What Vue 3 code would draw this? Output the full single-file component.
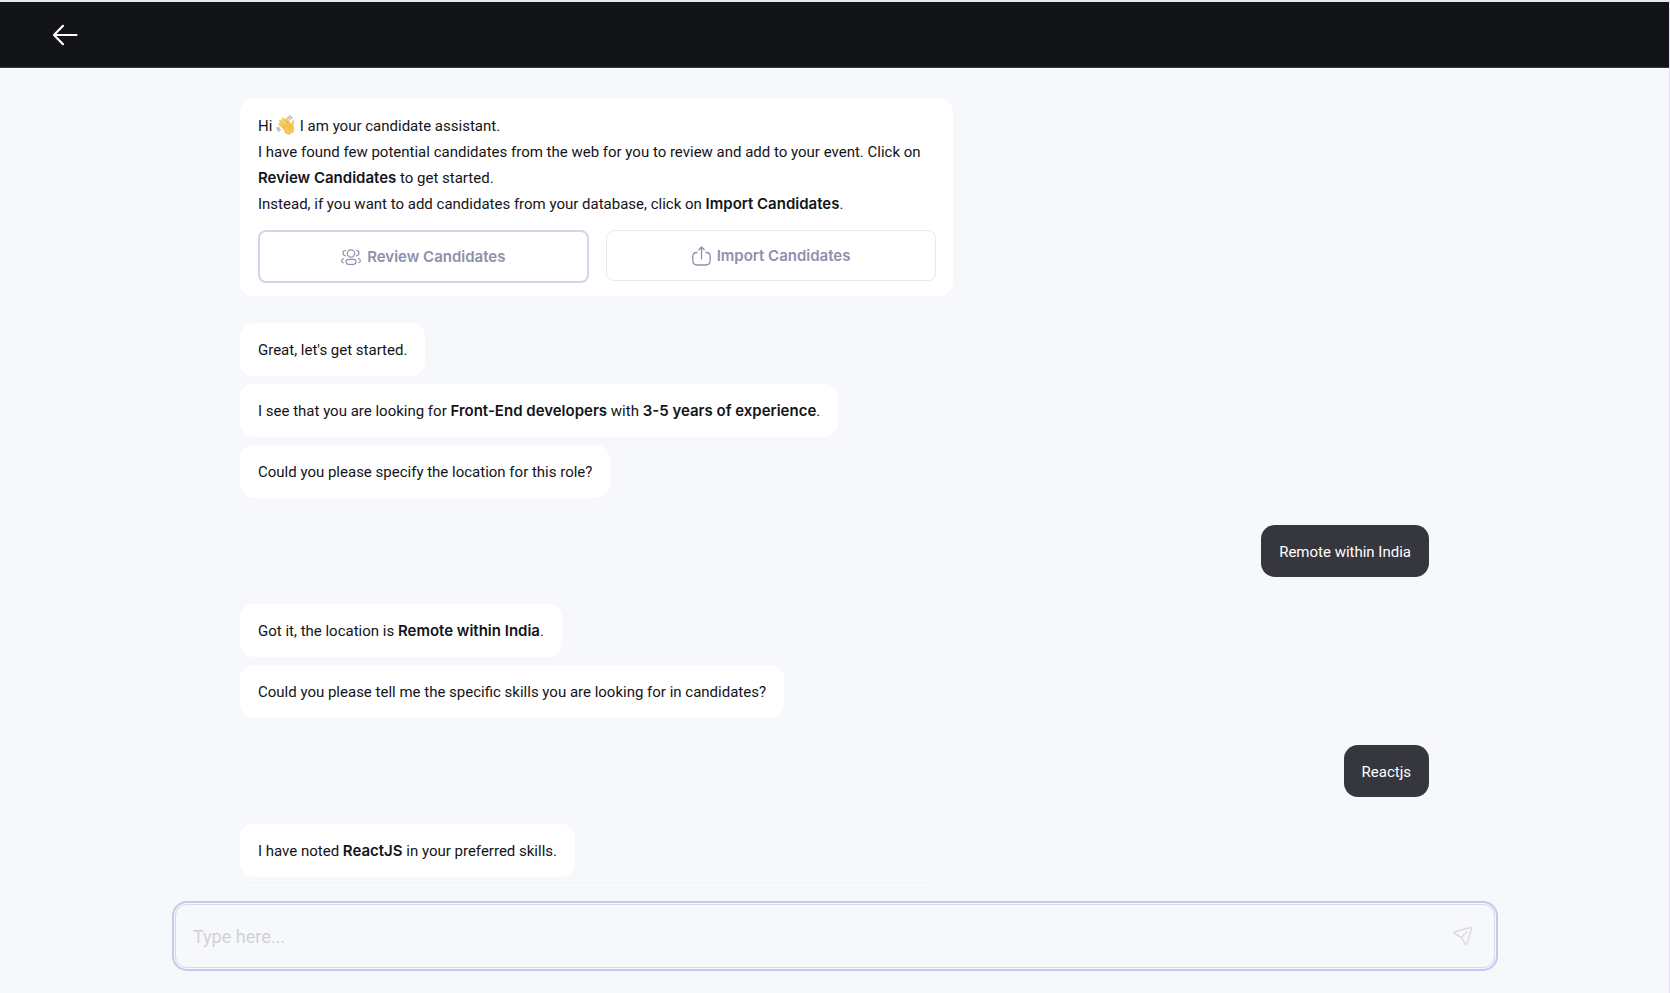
<script setup>
import { ref } from 'vue'

const draft = ref('')

const groups = [
  {
    from: 'bot',
    items: [
      [{ t: "Great, let's get started." }],
      [
        { t: 'I see that you are looking for ' },
        { t: 'Front-End developers', b: true },
        { t: ' with ' },
        { t: '3-5 years of experience', b: true },
        { t: '.' },
      ],
      [{ t: 'Could you please specify the location for this role?' }],
    ],
  },
  { from: 'user', items: [[{ t: 'Remote within India' }]] },
  {
    from: 'bot',
    items: [
      [{ t: 'Got it, the location is ' }, { t: 'Remote within India', b: true }, { t: '.' }],
      [{ t: 'Could you please tell me the specific skills you are looking for in candidates?' }],
    ],
  },
  { from: 'user', items: [[{ t: 'Reactjs' }]] },
  {
    from: 'bot',
    items: [
      [{ t: 'I have noted ' }, { t: 'ReactJS', b: true }, { t: ' in your preferred skills.' }],
      [],
    ],
  },
]
</script>

<template>
  <div class="page">
    <header class="topbar">
      <button class="back" type="button" aria-label="Back">
        <svg width="26" height="22" viewBox="0 0 26 22" fill="none" stroke="#fff" stroke-width="2.200" stroke-linecap="round" stroke-linejoin="round">
          <path d="M24.500 11H2M11 1.800 2 11l9 9.200" />
        </svg>
      </button>
    </header>

    <main class="chat">
      <section class="bubble intro">
        <p>
          Hi
          <svg class="wave" role="img" aria-label="waving hand" width="20" height="20" viewBox="0 0 20 20" fill="none">
            <g stroke="#f8c858" stroke-linecap="round">
              <path d="M3.300 9 9 14.500M4.200 5.800l6.300 7M6.800 3.600l6.200 7.200M10.800 4.200l4.200 6.300" stroke-width="2.300" />
              <path d="M17.300 6.300c-1 1.500-1 3-.6 5" stroke-width="2.200" />
            </g>
            <path d="M6 11 13 7l3 2.500 2.100 2.500c1 4-1.400 6.700-4.600 7-2.500.2-4.200-1.500-5.700-3.500z" fill="#f8c858" />
            <path d="m4.600 8 4.600 5M6.400 5.600l4.800 5.600M9.400 4.700l4 5.300M15.500 10c-1.800.8-2.300 2.500-1.800 4.300M9 17c1.500 1.800 3.300 2.300 5 2" stroke="#dd9c38" stroke-width=".7" stroke-linecap="round" />
            <path d="M13 .8c1.500.3 2.500 1.200 3 2.600M11.800 2.400c1 .2 1.800.8 2.400 1.900M.8 12.500c.2 1.500 1 2.800 2.300 3.700M2.600 12.200c.2 1 .8 1.900 1.600 2.500" stroke="#9fa1a6" stroke-width="1.100" stroke-linecap="round" />
          </svg>
          I am your candidate assistant.
        </p>
        <p>
          I have found few potential candidates from the web for you to review and add to your event. Click on
          <b>Review Candidates</b> to get started.
        </p>
        <p>Instead, if you want to add candidates from your database, click on <b>Import Candidates</b>.</p>
        <div class="actions">
          <button class="action strong" type="button">
            <svg width="20" height="16" viewBox="0 0 20 16" fill="none" stroke="currentColor" stroke-width="1.200" stroke-linecap="round">
              <circle cx="10" cy="4.500" r="3.700" />
              <rect x="5" y="10.300" width="10" height="5" rx="2.500" />
              <path d="M4.500 1.500C2.800 1.500 2 2.700 2 4s.8 2.500 2.500 2.800M15.500 1.500c1.700 0 2.500 1.200 2.500 2.500s-.8 2.500-2.500 2.800M2.500 9.500C1 10.200.6 11 .6 11.800s.6 1.500 1.700 1.900M17.500 9.500c1.500.7 1.900 1.500 1.900 2.300s-.6 1.500-1.700 1.900" />
            </svg>
            Review Candidates
          </button>
          <button class="action" type="button">
            <svg width="19" height="20" viewBox="0 0 19 20" fill="none" stroke="currentColor" stroke-width="1.300" stroke-linecap="round" stroke-linejoin="round">
              <path d="M9.500 13V1.200M6.800 3.700l2.700-2.800 2.700 2.800M5 6.500C2 6.500.8 7.800.8 10.500v4c0 3 1.300 4.500 4.500 4.500h8.400c3.200 0 4.500-1.500 4.500-4.500v-4c0-2.700-1.200-4-4.200-4" />
            </svg>
            Import Candidates
          </button>
        </div>
      </section>

      <section v-for="(g, i) in groups" :key="i" class="group" :class="g.from">
        <div v-for="(m, j) in g.items" :key="j" class="bubble" :class="{ pending: !m.length }">
          <template v-for="(s, k) in m" :key="k"><b v-if="s.b">{{ s.t }}</b><template v-else>{{ s.t }}</template></template>
        </div>
      </section>
    </main>

    <form class="composer" @submit.prevent>
      <div class="field">
        <input v-model="draft" type="text" placeholder="Type here..." aria-label="Message" />
        <button class="send" type="submit" aria-label="Send">
          <svg width="20" height="20" viewBox="0 0 20 20" fill="none" stroke="#d9d9e3" stroke-width="1.400" stroke-linecap="round" stroke-linejoin="round">
            <path d="M17.500 1.500 2.200 5.600C1 6 .9 7 1.900 7.600L8.300 11.400l3.800 6.300c.6 1 1.700.8 2-.3L18.500 2.500c.2-.7-.3-1.200-1-1zM8.300 11.400l5.300-5.300" />
          </svg>
        </button>
      </div>
    </form>
  </div>
</template>

<style>
body {
  background: #f7f8fc;
}
</style>

<style scoped>
.page {
  box-sizing: border-box;
  height: 100vh;
  display: flex;
  flex-direction: column;
  overflow: hidden;
  border-top: 2px solid #e4e8ea;
  border-right: 1px solid #dfe5f6;
  background: #f7f8fc;
  color: #131418;
  font-family: Roboto, "Liberation Sans", sans-serif;
  font-size: 15px;
  line-height: 26px;
}
button {
  font: inherit;
  cursor: pointer;
}
.topbar {
  box-sizing: border-box;
  flex: none;
  height: 66px;
  display: flex;
  align-items: center;
  padding: 0 52px;
  background: #131418;
  border-bottom: 1px solid #36363e;
}
.back,
.send {
  display: flex;
  padding: 0;
  border: 0;
  background: none;
}
.chat {
  flex: 1;
  min-height: 0;
  overflow: hidden;
  display: flex;
  flex-direction: column;
  gap: 27px;
  padding: 30px 240px 0;
}
.bubble {
  box-sizing: border-box;
  flex: none;
  min-height: 53px;
  padding: 14px 18px 12px;
  border-radius: 14px;
  background: #fff;
}
.intro {
  width: 60%;
  padding: 15px 17px 13px 18px;
}
.intro p {
  margin: 0;
}
.wave {
  vertical-align: -4px;
}
.actions {
  display: grid;
  grid-template-columns: 1fr 1fr;
  align-items: start;
  gap: 17px;
  margin-top: 13px;
}
.action {
  display: flex;
  align-items: center;
  justify-content: center;
  gap: 6px;
  padding: 12px;
  border: 1px solid #e9e8f2;
  border-radius: 8px;
  background: #fff;
  color: #8f8fac;
  line-height: 25px;
}
.action.strong {
  border: 2px solid #d6d4e5;
}
.group {
  flex: none;
  display: flex;
  flex-direction: column;
  align-items: flex-start;
  gap: 8px;
}
.group.user {
  align-items: flex-end;
}
.group.user .bubble {
  min-height: 52px;
  background: #36363e;
  color: #fff;
}
.pending {
  width: 59%;
}
b,
.action {
  font-family: Inter, "Liberation Sans", sans-serif;
  font-weight: 600;
}
b {
  line-height: 1;
}
.composer {
  flex: none;
  padding: 18px 174px 25px 175px;
}
.field {
  display: flex;
  align-items: center;
  padding: 0 21px 0 17px;
  border: 1px solid #dadbe2;
  border-radius: 12px;
  box-shadow: 0 0 0 1px #f7f8fc, 0 0 0 3px #c1caf0;
}
.field input {
  flex: 1;
  min-width: 0;
  height: 62px;
  padding: 0;
  border: 0;
  outline: 0;
  background: none;
  font: inherit;
  font-size: 18px;
  color: #131418;
}
.field input::placeholder {
  color: #d0d1d6;
  opacity: 1;
}
</style>
